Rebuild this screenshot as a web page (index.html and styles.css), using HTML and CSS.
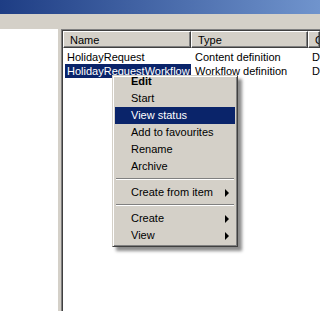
FILE: index.html
```html
<!DOCTYPE html>
<html lang="en">
<head>
<meta charset="UTF-8">
<title>Workflow list</title>
<link rel="stylesheet" href="styles.css">
</head>
<body>

<div class="titlebar"></div>
<div class="toolbar"></div>

<div class="main">
    <div class="tree"></div>
    <div class="splitter"></div>
    <div class="list">
        <div class="header">
            <div class="col col-name">Name</div>
            <div class="col col-type">Type</div>
            <div class="col col-more">Comment</div>
        </div>
        <div class="rows">
            <div class="row">
                <div class="cell col-name"><span class="label">HolidayRequest</span></div>
                <div class="cell col-type">Content definition</div>
                <div class="cell col-more">Draft</div>
            </div>
            <div class="row">
                <div class="cell col-name"><span class="label selected">HolidayRequestWorkflow</span></div>
                <div class="cell col-type">Workflow definition</div>
                <div class="cell col-more">Draft</div>
            </div>
        </div>
    </div>
</div>

<!-- context menu -->
<div class="popup">
    <div class="item first"><b>Edit</b></div>
    <div class="item">Start</div>
    <div class="item active">View status</div>
    <div class="item">Add to favourites</div>
    <div class="item">Rename</div>
    <div class="item">Archive</div>
    <div class="sep"></div>
    <div class="item sub">Create from item</div>
    <div class="sep"></div>
    <div class="item sub">Create</div>
    <div class="item sub">View</div>
</div>

</body>
</html>
```

FILE: styles.css
```css
body {
    margin: 0;
    width: 320px;
    height: 311px;
    overflow: hidden;
    background-color: #d4d0c8;
    font-family: "Liberation Sans", Arial, sans-serif;
    font-size: 11px;
    color: #000;
}

.titlebar {
    height: 14px;
    background: linear-gradient(to right, #1e3d84, #7094cd);
}

.toolbar {
    height: 15px;
    background-color: #d4d0c8;
}

.main {
    display: flex;
    height: 282px;
}

.tree {
    width: 58px;
    background-color: #fff;
}

.splitter {
    width: 3px;
}

.list {
    flex: 1;
    background-color: #fff;
    border-top: 1px solid #808080;
    border-left: 1px solid #808080;
    box-shadow: inset 1px 1px 0 #404040;
    padding: 1px 0 0 1px;
    overflow: hidden;
}

.header {
    display: flex;
    height: 17px;
}

.header .col {
    box-sizing: border-box;
    background-color: #d4d0c8;
    border-top: 1px solid #fff;
    border-left: 1px solid #fff;
    border-right: 1px solid #404040;
    border-bottom: 1px solid #404040;
    box-shadow: inset -1px -1px 0 #808080;
    padding-left: 6px;
    padding-top: 1px;
    line-height: 14px;
    white-space: nowrap;
    overflow: hidden;
}

.col-name {
    width: 128px;
    flex: none;
}

.col-type {
    width: 117px;
    flex: none;
}

.col-more {
    flex: 1;
}

.rows {
    padding-top: 2px;
}

.row {
    display: flex;
    height: 14px;
    line-height: 14px;
}

.cell {
    box-sizing: border-box;
    white-space: nowrap;
    overflow: hidden;
    padding-left: 4px;
}

.row .col-name {
    padding-left: 2px;
}

.label {
    padding: 0 2px;
}

.label.selected {
    display: inline-block;
    background-color: #0a246a;
    color: #fff;
}

.popup {
    position: absolute;
    left: 112px;
    top: 75px;
    width: 120px;
    background-color: #d4d0c8;
    border-top: 1px solid #d4d0c8;
    border-left: 1px solid #d4d0c8;
    border-right: 1px solid #404040;
    border-bottom: 1px solid #404040;
    box-shadow: inset 1px 1px 0 #fff, inset -1px -1px 0 #808080, 4px 4px 3px rgba(0, 0, 0, 0.45);
    padding: 2px;
}

.item {
    position: relative;
    height: 17px;
    line-height: 17px;
    padding-left: 16px;
    white-space: nowrap;
}

.item.first {
    height: 12px;
    line-height: 7px;
}

.item.active {
    background-color: #0a246a;
    color: #fff;
}

.item.sub::after {
    content: "";
    position: absolute;
    right: 6px;
    top: 5px;
    border-left: 4px solid #000;
    border-top: 4px solid transparent;
    border-bottom: 4px solid transparent;
}

.sep {
    height: 9px;
    position: relative;
}

.sep::before {
    content: "";
    position: absolute;
    left: 1px;
    right: 1px;
    top: 3px;
    border-top: 1px solid #808080;
    border-bottom: 1px solid #fff;
}
```
